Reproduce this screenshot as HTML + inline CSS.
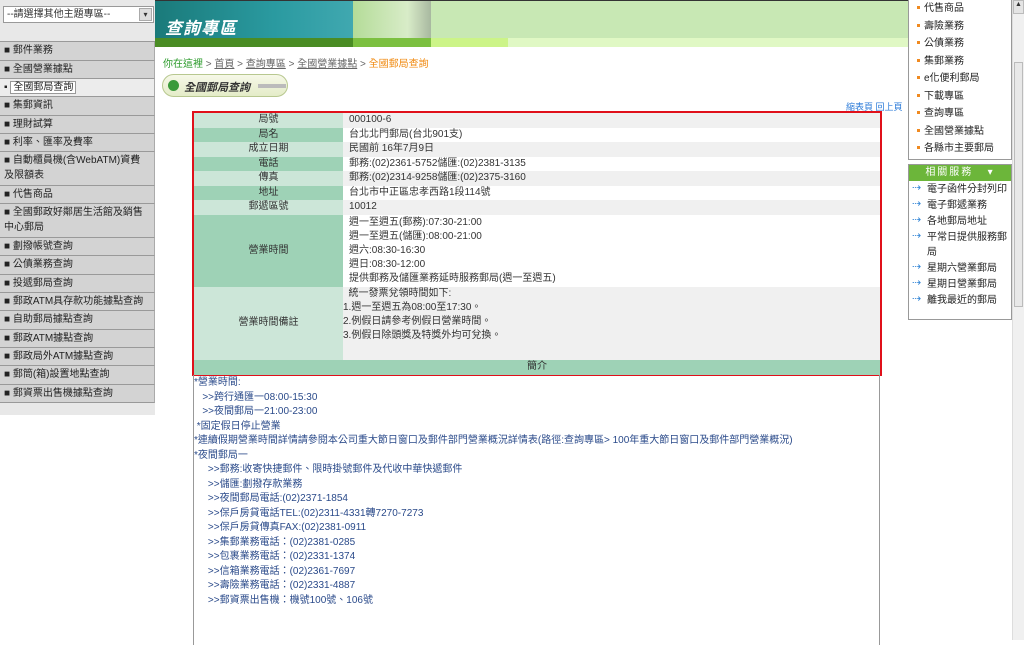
<!DOCTYPE html>
<html><head><meta charset="utf-8"><style>
*{margin:0;padding:0;box-sizing:border-box}
body{width:1024px;height:640px;overflow:hidden;background:#fff;font-family:"Liberation Sans","Noto Sans CJK TC",sans-serif;font-size:10px;color:#333;position:relative}
.abs{position:absolute}
#side{left:0;top:0;width:155px;height:415px;background:#e8e8e8}
.sel{left:3px;top:6px;width:151px;height:17px;background:#fff;border:1px solid #999;font-size:10px;line-height:15px;padding-left:3px;color:#333}
.sel b{position:absolute;right:1px;top:1px;width:13px;height:13px;background:#ddd;border:1px solid #aaa;font-size:8px;line-height:11px;text-align:center;font-weight:normal}
.menu{left:0;top:41px;width:155px;border-top:1px solid #999}
.mi{background:#d3d3d3;border-bottom:1px solid #999;border-right:1px solid #aaa;font-size:10px;color:#222;padding:0 4px;line-height:17px;overflow:hidden;white-space:nowrap}
.mi.two{white-space:normal;line-height:14.5px;padding-top:2px}
.mi.sub{background:#ececec}
.mi.sub span{border:1px solid #999;background:#fff;padding:0 2px}
#ban{left:155px;top:0;width:753px;height:38px;background:#c8e8b4}
.teal{left:155px;top:0;width:198px;height:38px;background:linear-gradient(90deg,#1a7a7a,#2a9aa0 60%,#40a8b0)}
.mouse{left:353px;top:0;width:78px;height:38px;background:linear-gradient(90deg,#b4dc98,#d8ecc8 70%,#a8b8a0)}
.g{top:38px;height:9px}
#right{left:908px;top:0;width:104px;height:160px;border:1px solid #999;border-top:none;background:#fff}
#right div,#rel div{font-size:10px;line-height:17.5px;padding-left:15px;position:relative;color:#222}
#right div:before{content:"";position:absolute;left:8px;top:6px;width:3px;height:3px;background:#f08a20}
#rel{left:908px;top:164px;width:104px;height:156px;border:1px solid #999;background:#fff}
#rel .h{background:#6cb63a;color:#fff;text-align:center;height:16px;line-height:16px;padding:0;letter-spacing:2px}
#rel div.i{padding-left:18px;line-height:15px;margin-top:1px}
#rel div.i:before{content:"⇢";position:absolute;left:3px;top:-1px;color:#3a8ad8;font-size:11px}
#sb{left:1012px;top:0;width:12px;height:640px;background:#f0f0f0;border-left:1px solid #ddd}
table{border-collapse:collapse;width:686px}
td{font-size:10px;height:14.5px;line-height:14px;padding:0}
td.l{width:149px;text-align:center}
td.v{padding-left:6px}
.c1{background:#cce6d8}.c2{background:#9ed2b6}
.w1{background:#f0f0f0}.w2{background:#fff}
#tbl{left:192px;top:111px;width:690px;height:265px;border:2px solid #e0101a}
#intro{left:193px;top:375px;width:687px;height:270px;border-left:1px solid #999;border-right:1px solid #999;color:#2a4a8a;font-size:10px;line-height:14.5px;padding-top:1px}
</style></head><body>
<div id="side" class="abs"></div>
<div class="sel abs">--請選擇其他主題專區--<b>▾</b></div>
<div class="menu abs">
<div class="mi" style="height:19px">■ 郵件業務</div>
<div class="mi" style="height:18px">■ 全國營業據點</div>
<div class="mi sub" style="height:18px">▪ <span>全國郵局查詢</span></div>
<div class="mi" style="height:19px">■ 集郵資訊</div>
<div class="mi" style="height:18px">■ 理財試算</div>
<div class="mi" style="height:18px">■ 利率、匯率及費率</div>
<div class="mi two" style="height:34px">■ 自動櫃員機(含WebATM)資費及限額表</div>
<div class="mi" style="height:18px">■ 代售商品</div>
<div class="mi two" style="height:34px">■ 全國郵政好鄰居生活館及銷售中心郵局</div>
<div class="mi" style="height:18px">■ 劃撥帳號查詢</div>
<div class="mi" style="height:19px">■ 公債業務查詢</div>
<div class="mi" style="height:18px">■ 投遞郵局查詢</div>
<div class="mi" style="height:18px">■ 郵政ATM具存款功能據點查詢</div>
<div class="mi" style="height:19px">■ 自助郵局據點查詢</div>
<div class="mi" style="height:18px">■ 郵政ATM據點查詢</div>
<div class="mi" style="height:18px">■ 郵政局外ATM據點查詢</div>
<div class="mi" style="height:19px">■ 郵筒(箱)設置地點查詢</div>
<div class="mi" style="height:18px">■ 郵資票出售機據點查詢</div>
</div>
<div id="ban" class="abs"></div>
<div class="teal abs"><div style="position:absolute;left:10px;top:14px;color:#fff;font-size:17px;font-style:italic;font-weight:bold;letter-spacing:1px">查詢專區</div></div>
<div class="mouse abs"></div>
<div class="abs" style="left:155px;top:0;width:753px;height:1px;background:#333"></div>
<div class="abs g" style="left:155px;width:198px;background:#4a8c24"></div>
<div class="abs g" style="left:353px;width:78px;background:#7cc040"></div>
<div class="abs g" style="left:431px;width:77px;background:#ccf488"></div>
<div class="abs g" style="left:508px;width:400px;background:#e0f8c4"></div>
<div class="abs" style="left:163px;top:55px;font-size:10px;color:#666">
<span style="color:#2a9a2a">你在這裡</span> &gt; <u>首頁</u> &gt; <u>查詢專區</u> &gt; <u>全國營業據點</u> &gt; <span style="color:#f08a10">全國郵局查詢</span></div>
<div class="abs" style="left:162px;top:74px;width:126px;height:23px;border:1px solid #b8c890;border-radius:12px;background:linear-gradient(#f6f8e8,#e4ecc8)">
<div style="position:absolute;left:5px;top:5px;width:11px;height:11px;border-radius:6px;background:#3a9a3a"></div>
<div style="position:absolute;left:21px;top:4px;font-size:11px;font-weight:bold;font-style:italic;color:#333">全國郵局查詢</div>
<div style="position:absolute;left:95px;top:9px;width:28px;height:4px;background:#bbb"></div></div>
<div class="abs" style="left:846px;top:100px;font-size:9px;color:#2a7ad8">縮表頁 回上頁</div>
<div id="tbl" class="abs"><table>
<tr><td class="l c1">局號</td><td class="v w1">000100-6</td></tr>
<tr><td class="l c2">局名</td><td class="v w2">台北北門郵局(台北901支)</td></tr>
<tr><td class="l c1">成立日期</td><td class="v w1">民國前 16年7月9日</td></tr>
<tr><td class="l c2">電話</td><td class="v w2">郵務:(02)2361-5752儲匯:(02)2381-3135</td></tr>
<tr><td class="l c1">傳真</td><td class="v w1">郵務:(02)2314-9258儲匯:(02)2375-3160</td></tr>
<tr><td class="l c2">地址</td><td class="v w2">台北市中正區忠孝西路1段114號</td></tr>
<tr><td class="l c1">郵遞區號</td><td class="v w1">10012</td></tr>
<tr><td class="l c2" style="height:72px">營業時間</td><td class="v w2" style="height:72px">週一至週五(郵務):07:30-21:00<br>週一至週五(儲匯):08:00-21:00<br>週六:08:30-16:30<br>週日:08:30-12:00<br>提供郵務及儲匯業務延時服務郵局(週一至週五)</td></tr>
<tr><td class="l c1" style="height:73px">營業時間備註</td><td class="w1" style="height:73px;vertical-align:top">&nbsp;&nbsp;統一發票兌領時間如下:<br>1.週一至週五為08:00至17:30。<br>2.例假日請參考例假日營業時間。<br>3.例假日除頭獎及特獎外均可兌換。</td></tr>
<tr><td colspan="2" class="c2" style="text-align:center;height:15px">簡介</td></tr>
</table></div>
<div id="intro" class="abs">
*營業時間:<br>&nbsp;&nbsp;&nbsp;&gt;&gt;跨行通匯一08:00-15:30<br>&nbsp;&nbsp;&nbsp;&gt;&gt;夜間郵局一21:00-23:00<br>&nbsp;*固定假日停止營業<br>*連續假期營業時間詳情請參閱本公司重大節日窗口及郵件部門營業概況詳情表(路徑:查詢專區&gt; 100年重大節日窗口及郵件部門營業概況)<br>*夜間郵局一<br>
&nbsp;&nbsp;&nbsp;&nbsp;&nbsp;&gt;&gt;郵務:收寄快捷郵件、限時掛號郵件及代收中華快遞郵件<br>
&nbsp;&nbsp;&nbsp;&nbsp;&nbsp;&gt;&gt;儲匯:劃撥存款業務<br>
&nbsp;&nbsp;&nbsp;&nbsp;&nbsp;&gt;&gt;夜間郵局電話:(02)2371-1854<br>
&nbsp;&nbsp;&nbsp;&nbsp;&nbsp;&gt;&gt;保戶房貸電話TEL:(02)2311-4331轉7270-7273<br>
&nbsp;&nbsp;&nbsp;&nbsp;&nbsp;&gt;&gt;保戶房貸傳真FAX:(02)2381-0911<br>
&nbsp;&nbsp;&nbsp;&nbsp;&nbsp;&gt;&gt;集郵業務電話：(02)2381-0285<br>
&nbsp;&nbsp;&nbsp;&nbsp;&nbsp;&gt;&gt;包裹業務電話：(02)2331-1374<br>
&nbsp;&nbsp;&nbsp;&nbsp;&nbsp;&gt;&gt;信箱業務電話：(02)2361-7697<br>
&nbsp;&nbsp;&nbsp;&nbsp;&nbsp;&gt;&gt;壽險業務電話：(02)2331-4887<br>
&nbsp;&nbsp;&nbsp;&nbsp;&nbsp;&gt;&gt;郵資票出售機：機號100號、106號</div>
<div id="right" class="abs">
<div>代售商品</div><div>壽險業務</div><div>公債業務</div><div>集郵業務</div><div>e化便利郵局</div><div>下載專區</div><div>查詢專區</div><div>全國營業據點</div><div>各縣市主要郵局</div></div>
<div id="rel" class="abs"><div class="h">相關服務 &nbsp;&nbsp;▾</div>
<div class="i">電子函件分封列印</div><div class="i">電子郵遞業務</div><div class="i">各地郵局地址</div><div class="i">平常日提供服務郵局</div><div class="i">星期六營業郵局</div><div class="i">星期日營業郵局</div><div class="i">離我最近的郵局</div></div>
<div id="sb" class="abs"><div style="position:absolute;left:0;top:0;width:11px;height:14px;background:#e4e4e4;border:1px solid #bbb;font-size:7px;text-align:center">▲</div><div style="position:absolute;left:1px;top:62px;width:9px;height:245px;background:#e8e8e8;border:1px solid #bbb"></div></div>
</body></html>
